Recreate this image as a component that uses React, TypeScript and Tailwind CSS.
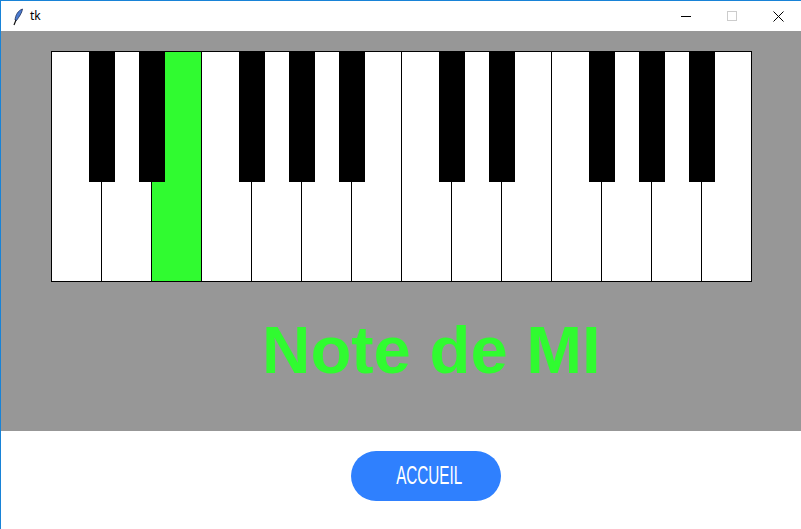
const whiteKeys = Array.from({ length: 14 }, (_, i) => i);
// boundaries (white key index) where a black key sits
const blackAt = [1, 2, 4, 5, 6, 8, 9, 11, 12, 13];
const activeKey = 2; // MI

function Feather() {
  return (
    <svg width="12" height="18" viewBox="0 0 12 18">
      <path d="M10.5 1 C6 2.5 3.5 7 3 12 L4.5 12.5 C7 9 10 5 10.5 1 Z" fill="#4a7bd0" stroke="#1c2f5a" strokeWidth="0.8" />
      <path d="M4 12 L2 17" stroke="#111" strokeWidth="1.2" />
    </svg>
  );
}

export default function App() {
  return (
    <div
      className="w-[801px] h-[529px] bg-white border-l border-t border-[#1883d7] flex flex-col overflow-hidden"
      style={{ fontFamily: '"Liberation Sans", Arial, sans-serif' }}
    >
      {/* title bar */}
      <div className="h-[30px] flex items-center relative">
        <div className="ml-[11px] mt-[1px]">
          <Feather />
        </div>
        <span className="ml-[6px] text-[12px] text-black" style={{ fontFamily: '"Noto Sans", sans-serif' }}>
          tk
        </span>
        <div className="ml-auto flex items-center h-full">
          <div className="w-[46px] h-full flex items-center justify-center">
            <div className="w-[10px] h-px bg-black mt-[1px]" />
          </div>
          <div className="w-[46px] h-full flex items-center justify-center">
            <div className="w-[10px] h-[10px] border border-[#cccccc]" />
          </div>
          <div className="w-[46px] h-full flex items-center justify-center">
            <svg width="11" height="11" viewBox="0 0 11 11">
              <path d="M0.5 0.5 L10.5 10.5 M10.5 0.5 L0.5 10.5" stroke="#000" strokeWidth="1" />
            </svg>
          </div>
        </div>
      </div>

      {/* canvas */}
      <div className="h-[400px] bg-[#979797] pt-[20px] pl-[50px]">
        <div className="relative flex w-[701px] h-[231px] border-t border-b border-r border-black">
          {whiteKeys.map((i) => (
            <div
              key={i}
              className={`w-[50px] h-full border-l border-black ${i === activeKey ? "bg-[#30fb30]" : "bg-white"}`}
            />
          ))}
          {blackAt.map((b) => (
            <div
              key={b}
              className="absolute top-0 w-[26px] h-[130px] bg-black"
              style={{ left: b * 50 - 12 }}
            />
          ))}
        </div>
        <div className="mt-[34px] ml-[211px] text-[67px] leading-none font-bold text-[#30fb30]">
          Note de MI
        </div>
      </div>

      {/* bottom */}
      <div className="pt-[20px] pl-[350px]">
        <button className="w-[150px] h-[50px] rounded-full bg-[#2f80fe] text-white flex items-center justify-center">
          <span className="inline-block ml-[6px] text-[25px] scale-x-[0.61]">ACCUEIL</span>
        </button>
      </div>
    </div>
  );
}
